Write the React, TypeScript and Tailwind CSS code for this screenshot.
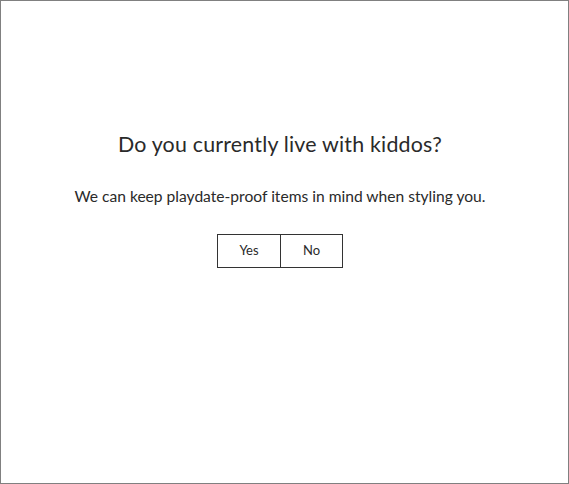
const App = () => {
  return (
    <div className="flex h-[484px] w-[569px] flex-col items-center border border-[#808080] bg-white pr-[9px] font-['Lato',sans-serif] text-[#2a2a2a]">
      <h1 className="mt-[127px] text-[21.4px] leading-[32px] tracking-[0.2px]">
        Do you currently live with kiddos?
      </h1>
      <p className="mt-[24px] text-[15.6px] leading-[24px]">
        We can keep playdate-proof items in mind when styling you.
      </p>
      <div className="mt-[26px] flex">
        <button className="h-[34px] w-[64px] border border-[#333] text-[13px]">Yes</button>
        <button className="-ml-px h-[34px] w-[63px] border border-[#333] text-[13px]">No</button>
      </div>
    </div>
  )
}

export default App
